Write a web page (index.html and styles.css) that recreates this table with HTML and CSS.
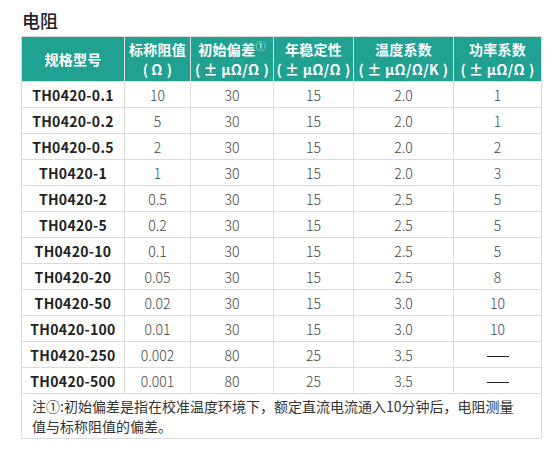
FILE: index.html
```html
<!DOCTYPE html>
<html lang="zh-CN">
<head>
<meta charset="utf-8">
<link rel="stylesheet" href="styles.css">
</head>
<body>
<div class="page">
  <h2 class="title">电阻</h2>
  <table class="spec">
    <colgroup>
      <col class="c1"><col class="c2"><col class="c3"><col class="c4"><col class="c5"><col class="c6">
    </colgroup>
    <thead>
      <tr>
        <th>规格型号</th>
        <th>标称阻值<br><span class="po">(</span>Ω<span class="pc">)</span></th>
        <th>初始偏差<sup>①</sup><br><span class="po">(</span>± μΩ/Ω<span class="pc">)</span></th>
        <th>年稳定性<br><span class="po">(</span>± μΩ/Ω<span class="pc">)</span></th>
        <th>温度系数<br><span class="po">(</span>± μΩ/Ω/K<span class="pc">)</span></th>
        <th>功率系数<br><span class="po">(</span>± μΩ/Ω<span class="pc">)</span></th>
      </tr>
    </thead>
    <tbody>
      <tr><td class="model">TH0420-0.1</td><td>10</td><td>30</td><td>15</td><td>2.0</td><td>1</td></tr>
      <tr><td class="model">TH0420-0.2</td><td>5</td><td>30</td><td>15</td><td>2.0</td><td>1</td></tr>
      <tr><td class="model">TH0420-0.5</td><td>2</td><td>30</td><td>15</td><td>2.0</td><td>2</td></tr>
      <tr><td class="model">TH0420-1</td><td>1</td><td>30</td><td>15</td><td>2.0</td><td>3</td></tr>
      <tr><td class="model">TH0420-2</td><td>0.5</td><td>30</td><td>15</td><td>2.5</td><td>5</td></tr>
      <tr><td class="model">TH0420-5</td><td>0.2</td><td>30</td><td>15</td><td>2.5</td><td>5</td></tr>
      <tr><td class="model">TH0420-10</td><td>0.1</td><td>30</td><td>15</td><td>2.5</td><td>5</td></tr>
      <tr><td class="model">TH0420-20</td><td>0.05</td><td>30</td><td>15</td><td>2.5</td><td>8</td></tr>
      <tr><td class="model">TH0420-50</td><td>0.02</td><td>30</td><td>15</td><td>3.0</td><td>10</td></tr>
      <tr><td class="model">TH0420-100</td><td>0.01</td><td>30</td><td>15</td><td>3.0</td><td>10</td></tr>
      <tr><td class="model">TH0420-250</td><td>0.002</td><td>80</td><td>25</td><td>3.5</td><td><span class="dash"></span></td></tr>
      <tr><td class="model">TH0420-500</td><td>0.001</td><td>80</td><td>25</td><td>3.5</td><td><span class="dash"></span></td></tr>
      <tr><td class="note" colspan="6">注①:初始偏差是指在校准温度环境下，额定直流电流通入10分钟后，电阻测量值与标称阻值的偏差。</td></tr>
    </tbody>
  </table>
</div>
</body>
</html>
```
FILE: styles.css
```css
html, body {
  margin: 0;
  padding: 0;
  background: #fff;
}
body {
  font-family: "Noto Sans CJK SC", "Noto Sans", sans-serif;
  color: #333;
}
.page {
  padding: 9px 0 0 21px;
}
.title {
  margin: 0 0 0 1px;
  font-size: 18px;
  font-weight: 500;
  line-height: 22px;
  height: 27px;
  color: #222;
}
.spec {
  border-collapse: collapse;
  table-layout: fixed;
  width: 520px;
  font-size: 14px;
}
.c1 { width: 103px; }
.c2 { width: 66px; }
.c3 { width: 83px; }
.c4 { width: 80px; }
.c5 { width: 100px; }
.c6 { width: 88px; }
.spec th, .spec td {
  border: 1px solid #dcdcdc;
  text-align: center;
  padding: 0;
}
.spec th {
  background: #20a191;
  color: #fff;
  font-weight: 700;
  line-height: 20px;
  height: 40px;
  padding: 2px 0 2px;
  font-size: 14px;
  white-space: nowrap;
  letter-spacing: 0.3px;
}
.po {
  margin-right: 3px;
}
.pc {
  margin-left: 4px;
}
.spec th sup {
  font-size: 10px;
  font-weight: 400;
  vertical-align: 5px;
  line-height: 0;
}
.spec td {
  height: 25px;
  line-height: 20px;
  font-weight: 300;
  color: #444;
}
.spec td.model {
  font-weight: 700;
  color: #222;
  letter-spacing: 0.3px;
}
.dash {
  display: inline-block;
  width: 22px;
  height: 0;
  border-top: 1px solid #222;
  vertical-align: middle;
}
.spec td.note {
  text-align: left;
  height: auto;
  padding: 2px 20px 2px 10px;
  font-weight: 400;
  color: #333;
  line-height: 20px;
}
```
